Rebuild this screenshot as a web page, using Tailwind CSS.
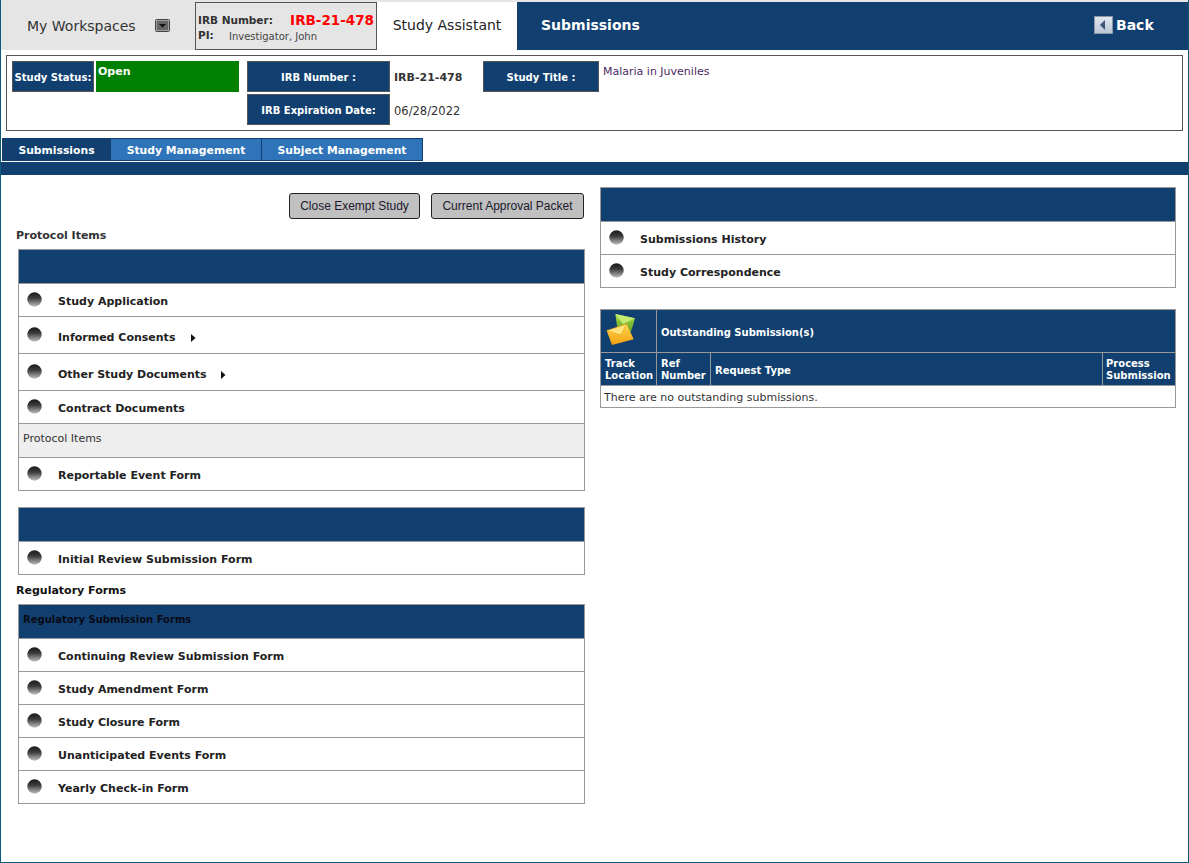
<!doctype html>
<html>

<head>
    <meta charset="UTF-8">
    <script src="https://cdn.jsdelivr.net/npm/@tailwindcss/browser@4"></script>
</head>

<body class="bg-white font-['DejaVu_Sans',sans-serif] text-[11px] text-[#2b2b2b]">
    <svg width="0" height="0" class="absolute">
        <defs>
            <linearGradient id="ball" x1="0" y1="0" x2="0" y2="1">
                <stop offset="0" stop-color="#1a1a1a" />
                <stop offset="0.4" stop-color="#3a3a3a" />
                <stop offset="1" stop-color="#c0c0c0" />
            </linearGradient>
            <linearGradient id="backbtn" x1="0" y1="0" x2="0" y2="1">
                <stop offset="0" stop-color="#e3e8ef" />
                <stop offset="1" stop-color="#b9c5d6" />
            </linearGradient>
        </defs>
    </svg>
    <div class="h-[863px] w-[1189px] overflow-hidden border border-t-0 border-[#0f5a78] pt-[2px] relative">
        <div class="absolute top-0 left-0 right-0 h-[2px] bg-[#e5e5e5]"></div>

        <!-- top bar -->
        <div class="flex h-[48px] bg-[#103f70] -ml-px">
            <div class="flex w-[195px] items-center bg-[#e5e5e5] pl-[27px] text-[14px] text-[#333]">
                <span>My Workspaces</span>
                <svg class="ml-[19px] -mt-[2px]" width="15" height="13" viewBox="0 0 15 13">
                    <rect x="0.5" y="0.5" width="14" height="12" rx="1" fill="#d8d8d8" stroke="#444" />
                    <rect x="1.500" y="1.500" width="12" height="10" fill="#666" />
                    <path d="M4 5h7l-3.500 3.500z" fill="#111" />
                </svg>
            </div>
            <div class="w-[182px] border border-[#555] bg-[#e5e5e5] pl-[2px] pr-[2px] pt-[8px] text-[10px]">
                <div class="flex h-[20px] items-center justify-between">
                    <b class="text-[10.500px] text-[#333]">IRB Number:</b>
                    <b class="-mt-[2px] text-[13.500px] text-[#f00]">IRB-21-478</b>
                </div>
                <div class="flex h-[10px] items-center">
                    <b class="w-[31px] text-[10.500px] text-[#333]">PI:</b><span class="text-[#444]">Investigator, John</span>
                </div>
            </div>
            <div class="flex w-[140px] items-center justify-center bg-white pb-[2px] text-[14px] text-[#222]">Study Assistant</div>
            <div class="flex w-[147px] items-center pl-[24px] pb-[2px] text-[14px] font-bold text-white">Submissions</div>
            <div class="ml-[430px] flex items-center gap-[3px] pb-[2px] text-[14px] font-bold text-white">
                <svg width="19" height="18" viewBox="0 0 19 18">
                    <rect x="0.5" y="0.5" width="18" height="17" fill="url(#backbtn)" stroke="#8b97a8" />
                    <path d="M11 4v10l-5-5z" fill="#3c5578" />
                </svg>
                <span>Back</span>
            </div>
        </div>

        <!-- study info -->
        <div class="mt-[5px] ml-[5px] h-[76px] w-[1177px] border border-[#555] pt-[5px] pl-[5px]">
            <div class="grid grid-cols-[82px_145px_143px_101px_116px_1fr] grid-rows-[31px_31px] gap-y-[2px]">
                <div class="flex items-center justify-center border border-[#555] bg-[#103f70] pt-[2px] text-[10px] font-bold whitespace-nowrap text-white">Study Status:</div>
                <div class="ml-[2px] bg-[#008000] pl-[2px] font-bold text-white leading-[22px]">Open</div>
                <div class="ml-[8px] -mr-[8px] flex items-center justify-center border border-[#555] bg-[#103f70] pt-[2px] text-[10px] font-bold text-white">IRB Number :</div>
                <div class="ml-[12px] flex items-center pt-[4px] font-bold text-[#333]">IRB-21-478</div>
                <div class="flex items-center justify-center border border-[#555] bg-[#103f70] pt-[2px] text-[10px] font-bold text-white">Study Title :</div>
                <div class="pl-[4px] pt-[3px] text-[#4b2a63]">Malaria in Juveniles</div>
                <div class="col-start-3 ml-[8px] -mr-[8px] flex items-center justify-center border border-[#555] bg-[#103f70] pt-[2px] text-[10px] font-bold text-white">IRB Expiration Date:</div>
                <div class="ml-[12px] flex items-center pt-[4px] text-[#333] text-[11.500px]">06/28/2022</div>
            </div>
        </div>

        <!-- tabs -->
        <div class="mt-[7px] ml-px flex h-[23px] w-[421px] border border-[#103f70] text-[10.800px] font-bold text-white">
            <div class="flex w-[107px] items-center justify-center bg-[#103f70] pt-[4px]">Submissions</div>
            <div class="flex w-[152px] items-center justify-center border-x border-[#103f70] bg-[#2f74b8] pt-[4px]">Study Management</div>
            <div class="flex flex-1 items-center justify-center bg-[#2f74b8] pt-[4px]">Subject Management</div>
        </div>
        <div class="mt-px h-[13px] bg-[#103f70]"></div>

        <div class="flex">
            <!-- left column -->
            <div class="ml-[15px] w-[584px]">
                <div class="mt-[18px] flex justify-end gap-[11px] pr-[16px] font-['Liberation_Sans',sans-serif] text-[12px] text-[#1a1a2e]">
                    <div class="flex h-[26px] w-[131px] items-center justify-center rounded-[3px] border border-[#222] bg-[#c0c0c0]">Close Exempt Study</div>
                    <div class="flex h-[26px] w-[153px] items-center justify-center rounded-[3px] border border-[#222] bg-[#c0c0c0]">Current Approval Packet</div>
                </div>
                <div class="mt-[10px] h-[20px] font-bold text-[#333] leading-[14px]">Protocol Items</div>
                <div class="ml-[2px] w-[567px] border border-[#999]">
                    <div class="h-[33px] bg-[#103f70]"></div>
                    <div class="flex h-[33px] items-center border-t border-[#999]"><svg class="ml-[8px] mb-[1px]" width="15" height="15"><circle cx="7.500" cy="7.500" r="7.200" fill="url(#ball)" /></svg><b class="ml-[16px] mt-[4px] text-[#222]">Study Application</b></div>
                    <div class="flex h-[37px] items-center border-t border-[#999]"><svg class="ml-[8px] mb-[2px]" width="15" height="15"><circle cx="7.500" cy="7.500" r="7.200" fill="url(#ball)" /></svg><b class="ml-[16px] mt-[6px] text-[#222]">Informed Consents</b><svg class="ml-[16px] mt-[6px]" width="5" height="8"><path d="M0 0l4.500 4L0 8z" fill="#111" /></svg></div>
                    <div class="flex h-[37px] items-center border-t border-[#999]"><svg class="ml-[8px] mb-[2px]" width="15" height="15"><circle cx="7.500" cy="7.500" r="7.200" fill="url(#ball)" /></svg><b class="ml-[16px] mt-[6px] text-[#222]">Other Study Documents</b><svg class="ml-[14px] mt-[6px]" width="5" height="8"><path d="M0 0l4.500 4L0 8z" fill="#111" /></svg></div>
                    <div class="flex h-[33px] items-center border-t border-[#999]"><svg class="ml-[8px] mb-[1px]" width="15" height="15"><circle cx="7.500" cy="7.500" r="7.200" fill="url(#ball)" /></svg><b class="ml-[16px] mt-[4px] text-[#222]">Contract Documents</b></div>
                    <div class="flex h-[34px] items-center border-t border-[#999] bg-[#eeeeee] pl-[4px] pb-[3px] text-[#333]">Protocol Items</div>
                    <div class="flex h-[33px] items-center border-t border-[#999]"><svg class="ml-[8px] mb-[1px]" width="15" height="15"><circle cx="7.500" cy="7.500" r="7.200" fill="url(#ball)" /></svg><b class="ml-[16px] mt-[4px] text-[#222]">Reportable Event Form</b></div>
                </div>

                <div class="mt-[16px] ml-[2px] w-[567px] border border-[#999]">
                    <div class="h-[33px] bg-[#103f70]"></div>
                    <div class="flex h-[33px] items-center border-t border-[#999]"><svg class="ml-[8px] mb-[1px]" width="15" height="15"><circle cx="7.500" cy="7.500" r="7.200" fill="url(#ball)" /></svg><b class="ml-[16px] mt-[4px] text-[#222]">Initial Review Submission Form</b></div>
                </div>

                <div class="mt-[9px] h-[20px] font-bold text-[#111] leading-[14px]">Regulatory Forms</div>
                <div class="ml-[2px] w-[567px] border border-[#999]">
                    <div class="flex h-[33px] items-center bg-[#103f70] pl-[4px] pb-[5px] text-[10px] font-bold text-[#0a0a14]">Regulatory Submission Forms</div>
                    <div class="flex h-[33px] items-center border-t border-[#999]"><svg class="ml-[8px] mb-[1px]" width="15" height="15"><circle cx="7.500" cy="7.500" r="7.200" fill="url(#ball)" /></svg><b class="ml-[16px] mt-[4px] text-[#222]">Continuing Review Submission Form</b></div>
                    <div class="flex h-[33px] items-center border-t border-[#999]"><svg class="ml-[8px] mb-[1px]" width="15" height="15"><circle cx="7.500" cy="7.500" r="7.200" fill="url(#ball)" /></svg><b class="ml-[16px] mt-[4px] text-[#222]">Study Amendment Form</b></div>
                    <div class="flex h-[33px] items-center border-t border-[#999]"><svg class="ml-[8px] mb-[1px]" width="15" height="15"><circle cx="7.500" cy="7.500" r="7.200" fill="url(#ball)" /></svg><b class="ml-[16px] mt-[4px] text-[#222]">Study Closure Form</b></div>
                    <div class="flex h-[33px] items-center border-t border-[#999]"><svg class="ml-[8px] mb-[1px]" width="15" height="15"><circle cx="7.500" cy="7.500" r="7.200" fill="url(#ball)" /></svg><b class="ml-[16px] mt-[4px] text-[#222]">Unanticipated Events Form</b></div>
                    <div class="flex h-[33px] items-center border-t border-[#999]"><svg class="ml-[8px] mb-[1px]" width="15" height="15"><circle cx="7.500" cy="7.500" r="7.200" fill="url(#ball)" /></svg><b class="ml-[16px] mt-[4px] text-[#222]">Yearly Check-in Form</b></div>
                </div>
            </div>

            <!-- right column -->
            <div class="w-[576px]">
                <div class="mt-[12px] border border-[#999]">
                    <div class="h-[33px] bg-[#103f70]"></div>
                    <div class="flex h-[33px] items-center border-t border-[#999]"><svg class="ml-[8px] mb-[1px]" width="15" height="15"><circle cx="7.500" cy="7.500" r="7.200" fill="url(#ball)" /></svg><b class="ml-[16px] mt-[4px] text-[#222]">Submissions History</b></div>
                    <div class="flex h-[33px] items-center border-t border-[#999]"><svg class="ml-[8px] mb-[1px]" width="15" height="15"><circle cx="7.500" cy="7.500" r="7.200" fill="url(#ball)" /></svg><b class="ml-[16px] mt-[4px] text-[#222]">Study Correspondence</b></div>
                </div>

                <div class="mt-[21px] border border-[#999] bg-[#103f70] text-[10px]">
                    <div class="flex h-[42px]">
                        <div class="w-[56px] border-r border-[#999] pl-[5px] pt-[3px]">
                            <svg width="30" height="33" viewBox="0 0 30 33">
                                <defs>
                                    <linearGradient id="env1" x1="0" y1="0" x2="0" y2="1"><stop offset="0" stop-color="#a5dc4a" /><stop offset="1" stop-color="#5f9e1e" /></linearGradient>
                                    <linearGradient id="env2" x1="0" y1="0" x2="0" y2="1"><stop offset="0" stop-color="#ffd850" /><stop offset="1" stop-color="#f2a010" /></linearGradient>
                                </defs>
                                <path d="M9.300 1L29 5.300 25 18.700 12 20z" fill="url(#env1)" />
                                <path d="M9.300 1L29 5.300 17 11z" fill="#c4ea72" />
                                <path d="M0.700 17.700L20.700 11 27.700 26.300 6 32z" fill="url(#env2)" />
                                <path d="M0.700 17.700L20.700 11 15 22z" fill="#ffe27a" stroke="#e09a10" stroke-width="0.600" />
                            </svg>
                        </div>
                        <div class="flex items-center pl-[4px] pt-[2px] font-bold text-white">Outstanding Submission(s)</div>
                    </div>
                    <div class="flex h-[33px] border-t border-[#999] pt-0 font-bold leading-[12px] text-white">
                        <div class="flex w-[56px] items-center border-r border-[#999] pl-[4px] pt-[2px]">Track<br>Location</div>
                        <div class="flex w-[54px] items-center border-r border-[#999] pl-[4px] pt-[2px]">Ref<br>Number</div>
                        <div class="flex w-[392px] items-center border-r border-[#999] pl-[4px] pt-[3px]">Request Type</div>
                        <div class="flex flex-1 items-center pl-[3px] pt-[2px]">Process<br>Submission</div>
                    </div>
                    <div class="flex h-[22px] items-center border-t border-[#999] bg-white pl-[3px] pt-[4px] text-[11px] text-[#333]">There are no outstanding submissions.</div>
                </div>
            </div>
        </div>
    </div>
</body>

</html>
